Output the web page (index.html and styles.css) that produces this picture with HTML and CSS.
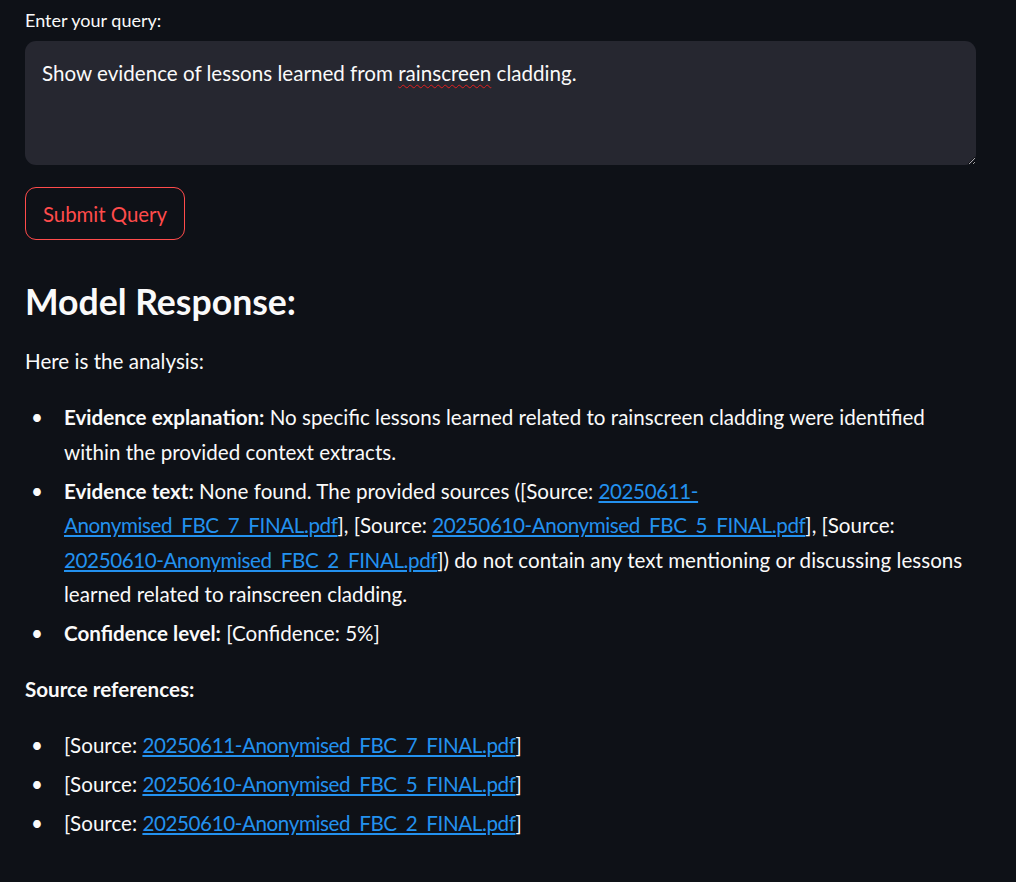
FILE: index.html
```html
<!DOCTYPE html>
<html lang="en">
<head>
<meta charset="utf-8">
<title>Query</title>
<link rel="stylesheet" href="styles.css">
</head>
<body>
<main class="main">
  <label class="field-label">Enter your query:</label>
  <div class="query-box">Show evidence of lessons learned from <span class="misspelled">rainscreen</span> cladding.</div>
  <button class="submit-btn" type="button">Submit Query</button>

  <h3 class="response-title">Model Response:</h3>
  <p class="para">Here is the analysis:</p>
  <ul class="list">
    <li><strong>Evidence explanation:</strong> No specific lessons learned related to rainscreen cladding were identified within the provided context extracts.</li>
    <li><strong>Evidence text:</strong> None found. The provided sources ([Source: <a href="#">20250611-Anonymised_FBC_7_FINAL.pdf</a>], [Source: <a href="#">20250610-Anonymised_FBC_5_FINAL.pdf</a>], [Source: <a href="#">20250610-Anonymised_FBC_2_FINAL.pdf</a>]) do not contain any text mentioning or discussing lessons learned related to rainscreen cladding.</li>
    <li><strong>Confidence level:</strong> [Confidence: 5%]</li>
  </ul>
  <p class="para"><strong>Source references:</strong></p>
  <ul class="list">
    <li>[Source: <a href="#">20250611-Anonymised_FBC_7_FINAL.pdf</a>]</li>
    <li>[Source: <a href="#">20250610-Anonymised_FBC_5_FINAL.pdf</a>]</li>
    <li>[Source: <a href="#">20250610-Anonymised_FBC_2_FINAL.pdf</a>]</li>
  </ul>
</main>
</body>
</html>
```
FILE: styles.css
```css
html, body {
  margin: 0;
  padding: 0;
  background: #0e1117;
}
body {
  color: #fafafa;
  font-family: Lato, "Noto Sans", sans-serif;
  font-size: 20.6px;
  line-height: 34.56px;
}
.main {
  padding: 8px 40px 40px 25px;
}
.field-label {
  display: block;
  font-size: 18px;
  line-height: 24px;
  margin-bottom: 9px;
}
.query-box {
  box-sizing: border-box;
  height: 124px;
  background: #262730;
  border-radius: 11px;
  padding: 15px 17px;
  overflow: auto;
  resize: vertical;
  font-size: 20.6px;
  line-height: 34.56px;
}
.misspelled {
  text-decoration: underline wavy #e02020;
  text-decoration-thickness: 1px;
  text-underline-offset: 3px;
}
.submit-btn {
  display: block;
  box-sizing: border-box;
  margin-top: 22px;
  width: 160px;
  height: 53px;
  background: transparent;
  border: 1px solid #ff4b4b;
  border-radius: 11px;
  color: #ff4b4b;
  font-family: inherit;
  font-size: 20.4px;
  padding: 0;
}
.response-title {
  margin: 39px 0 0;
  font-size: 35.6px;
  line-height: 46px;
  font-weight: 700;
}
.para {
  margin: 19px 0 21.6px;
}
.list {
  margin: 0 0 21.6px;
  padding-left: 39px;
  list-style: none;
}
.list li {
  margin: 0 0 4.3px;
}
.list li::before {
  content: "\2022";
  display: inline-block;
  box-sizing: border-box;
  width: 39px;
  margin-left: -39px;
  padding-left: 6px;
}
.list strong, .para strong {
  font-weight: 700;
}
a {
  color: #2391ef;
  text-decoration: underline;
  letter-spacing: -0.4px;
}
```
